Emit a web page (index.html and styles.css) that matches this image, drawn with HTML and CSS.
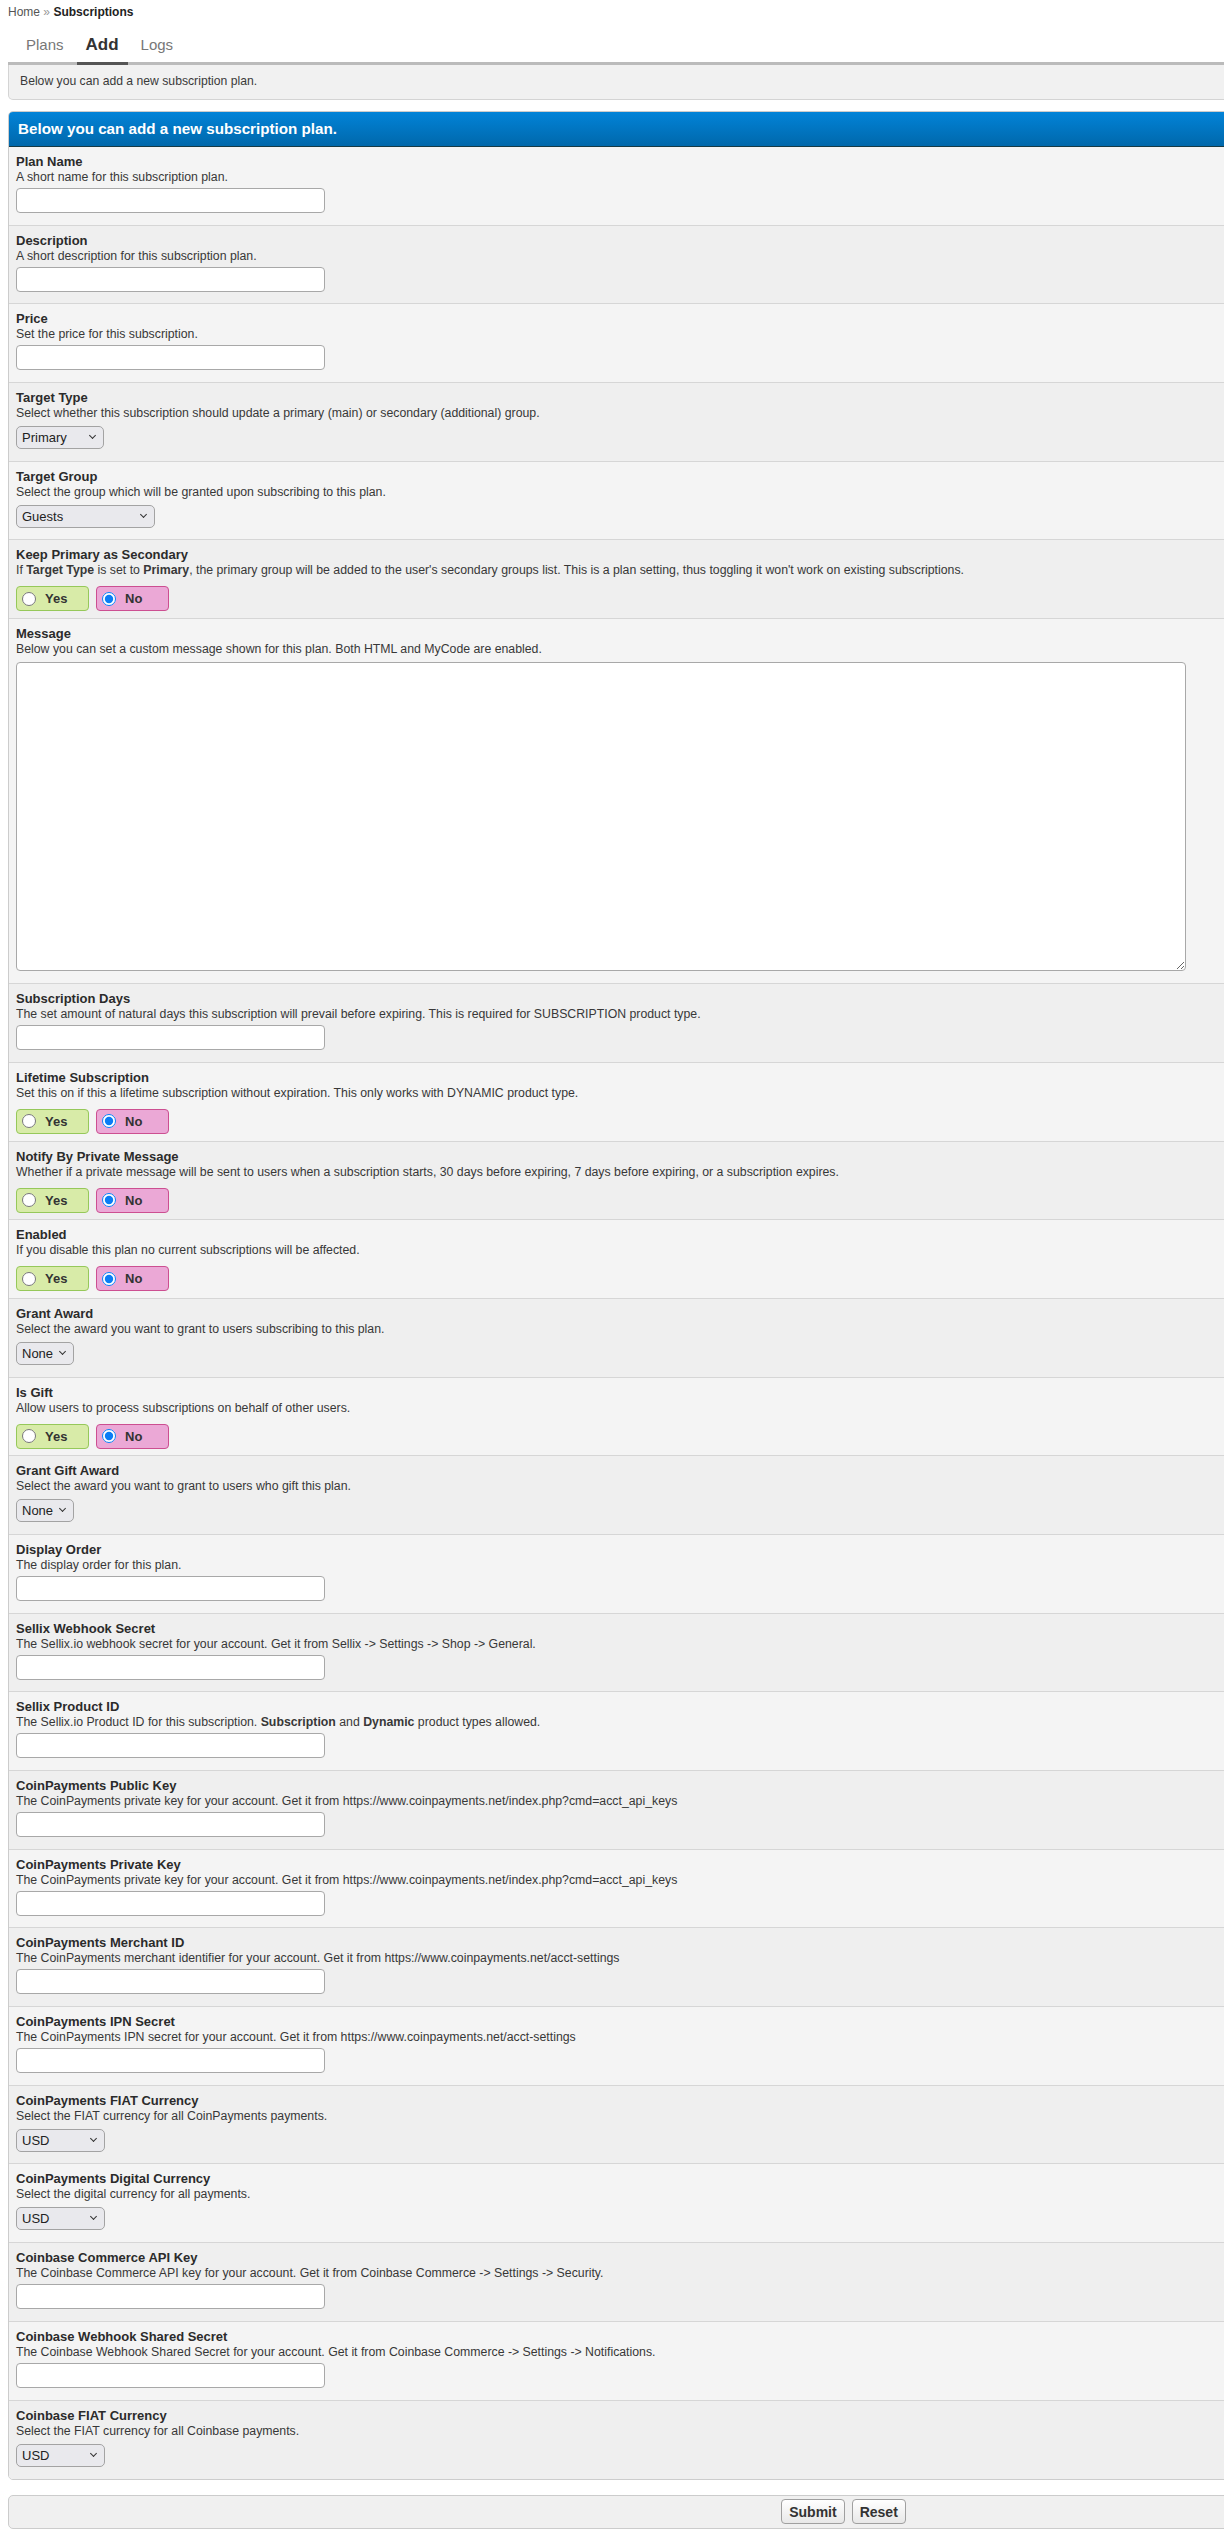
FILE: index.html
```html
<!DOCTYPE html>
<html lang="en">
<head>
    <meta charset="UTF-8" />
    <title>Subscriptions - Add</title>
    <link rel="stylesheet" href="styles.css">
</head>
<body>
    <div class="page">
        <div class="breadcrumb">
            <a href="#">Home</a> <span class="sep">&raquo;</span> <strong>Subscriptions</strong>
        </div>

        <ul class="tabs">
            <li><a href="#">Plans</a></li>
            <li class="active"><a href="#">Add</a></li>
            <li><a href="#">Logs</a></li>
        </ul>
        <div class="tab-info">Below you can add a new subscription plan.</div>

        <form class="form-container">
            <div class="form-head">Below you can add a new subscription plan.</div>

            <div class="row">
                <label class="row-title">Plan Name</label>
                <div class="row-desc">A short name for this subscription plan.</div>
                <input type="text" class="text-input" />
            </div>
            <div class="row">
                <label class="row-title">Description</label>
                <div class="row-desc">A short description for this subscription plan.</div>
                <input type="text" class="text-input" />
            </div>
            <div class="row">
                <label class="row-title">Price</label>
                <div class="row-desc">Set the price for this subscription.</div>
                <input type="text" class="text-input" />
            </div>
            <div class="row">
                <label class="row-title">Target Type</label>
                <div class="row-desc">Select whether this subscription should update a primary (main) or secondary (additional) group.</div>
                <span class="select w-primary"><select><option>Primary</option><option>Secondary</option></select></span>
            </div>
            <div class="row">
                <label class="row-title">Target Group</label>
                <div class="row-desc">Select the group which will be granted upon subscribing to this plan.</div>
                <span class="select w-guests"><select><option>Guests</option></select></span>
            </div>
            <div class="row">
                <label class="row-title">Keep Primary as Secondary</label>
                <div class="row-desc">If <strong>Target Type</strong> is set to <strong>Primary</strong>, the primary group will be added to the user's secondary groups list. This is a plan setting, thus toggling it won't work on existing subscriptions.</div>
                <div class="yesno">
                    <label class="yes"><input type="radio" name="keep_primary" /> Yes</label>
                    <label class="no"><input type="radio" name="keep_primary" checked /> No</label>
                </div>
            </div>
            <div class="row row-tall">
                <label class="row-title">Message</label>
                <div class="row-desc">Below you can set a custom message shown for this plan. Both HTML and MyCode are enabled.</div>
                <textarea class="text-area"></textarea>
            </div>
            <div class="row">
                <label class="row-title">Subscription Days</label>
                <div class="row-desc">The set amount of natural days this subscription will prevail before expiring. This is required for SUBSCRIPTION product type.</div>
                <input type="text" class="text-input" />
            </div>
            <div class="row">
                <label class="row-title">Lifetime Subscription</label>
                <div class="row-desc">Set this on if this a lifetime subscription without expiration. This only works with DYNAMIC product type.</div>
                <div class="yesno">
                    <label class="yes"><input type="radio" name="lifetime" /> Yes</label>
                    <label class="no"><input type="radio" name="lifetime" checked /> No</label>
                </div>
            </div>
            <div class="row">
                <label class="row-title">Notify By Private Message</label>
                <div class="row-desc">Whether if a private message will be sent to users when a subscription starts, 30 days before expiring, 7 days before expiring, or a subscription expires.</div>
                <div class="yesno">
                    <label class="yes"><input type="radio" name="notify_pm" /> Yes</label>
                    <label class="no"><input type="radio" name="notify_pm" checked /> No</label>
                </div>
            </div>
            <div class="row">
                <label class="row-title">Enabled</label>
                <div class="row-desc">If you disable this plan no current subscriptions will be affected.</div>
                <div class="yesno">
                    <label class="yes"><input type="radio" name="enabled" /> Yes</label>
                    <label class="no"><input type="radio" name="enabled" checked /> No</label>
                </div>
            </div>
            <div class="row">
                <label class="row-title">Grant Award</label>
                <div class="row-desc">Select the award you want to grant to users subscribing to this plan.</div>
                <span class="select w-none"><select><option>None</option></select></span>
            </div>
            <div class="row">
                <label class="row-title">Is Gift</label>
                <div class="row-desc">Allow users to process subscriptions on behalf of other users.</div>
                <div class="yesno">
                    <label class="yes"><input type="radio" name="is_gift" /> Yes</label>
                    <label class="no"><input type="radio" name="is_gift" checked /> No</label>
                </div>
            </div>
            <div class="row">
                <label class="row-title">Grant Gift Award</label>
                <div class="row-desc">Select the award you want to grant to users who gift this plan.</div>
                <span class="select w-none"><select><option>None</option></select></span>
            </div>
            <div class="row">
                <label class="row-title">Display Order</label>
                <div class="row-desc">The display order for this plan.</div>
                <input type="text" class="text-input" />
            </div>
            <div class="row">
                <label class="row-title">Sellix Webhook Secret</label>
                <div class="row-desc">The Sellix.io webhook secret for your account. Get it from Sellix -&gt; Settings -&gt; Shop -&gt; General.</div>
                <input type="text" class="text-input" />
            </div>
            <div class="row">
                <label class="row-title">Sellix Product ID</label>
                <div class="row-desc">The Sellix.io Product ID for this subscription. <strong>Subscription</strong> and <strong>Dynamic</strong> product types allowed.</div>
                <input type="text" class="text-input" />
            </div>
            <div class="row">
                <label class="row-title">CoinPayments Public Key</label>
                <div class="row-desc">The CoinPayments private key for your account. Get it from https://www.coinpayments.net/index.php?cmd=acct_api_keys</div>
                <input type="text" class="text-input" />
            </div>
            <div class="row">
                <label class="row-title">CoinPayments Private Key</label>
                <div class="row-desc">The CoinPayments private key for your account. Get it from https://www.coinpayments.net/index.php?cmd=acct_api_keys</div>
                <input type="text" class="text-input" />
            </div>
            <div class="row">
                <label class="row-title">CoinPayments Merchant ID</label>
                <div class="row-desc">The CoinPayments merchant identifier for your account. Get it from https://www.coinpayments.net/acct-settings</div>
                <input type="text" class="text-input" />
            </div>
            <div class="row">
                <label class="row-title">CoinPayments IPN Secret</label>
                <div class="row-desc">The CoinPayments IPN secret for your account. Get it from https://www.coinpayments.net/acct-settings</div>
                <input type="text" class="text-input" />
            </div>
            <div class="row">
                <label class="row-title">CoinPayments FIAT Currency</label>
                <div class="row-desc">Select the FIAT currency for all CoinPayments payments.</div>
                <span class="select w-usd"><select><option>USD</option></select></span>
            </div>
            <div class="row">
                <label class="row-title">CoinPayments Digital Currency</label>
                <div class="row-desc">Select the digital currency for all payments.</div>
                <span class="select w-usd"><select><option>USD</option></select></span>
            </div>
            <div class="row">
                <label class="row-title">Coinbase Commerce API Key</label>
                <div class="row-desc">The Coinbase Commerce API key for your account. Get it from Coinbase Commerce -&gt; Settings -&gt; Security.</div>
                <input type="text" class="text-input" />
            </div>
            <div class="row">
                <label class="row-title">Coinbase Webhook Shared Secret</label>
                <div class="row-desc">The Coinbase Webhook Shared Secret for your account. Get it from Coinbase Commerce -&gt; Settings -&gt; Notifications.</div>
                <input type="text" class="text-input" />
            </div>
            <div class="row">
                <label class="row-title">Coinbase FIAT Currency</label>
                <div class="row-desc">Select the FIAT currency for all Coinbase payments.</div>
                <span class="select w-usd"><select><option>USD</option></select></span>
            </div>
        </form>

        <div class="form-buttons">
            <button type="submit" class="btn">Submit</button>
            <button type="reset" class="btn">Reset</button>
        </div>
    </div>
</body>
</html>
```

FILE: styles.css
```css
html,
body {
    overflow-x: hidden;
}

body {
    margin: 0;
    padding: 0 8px;
    background: #ffffff;
    color: #333333;
    font-family: "Liberation Sans", Arial, sans-serif;
    font-size: 12px;
}

.page {
    width: 1671px;
}

/* breadcrumb */

.breadcrumb {
    padding-top: 5px;
    line-height: 14px;
    font-size: 12px;
    color: #555555;
}

.breadcrumb a {
    color: #555555;
    text-decoration: none;
}

.breadcrumb .sep {
    color: #999999;
}

.breadcrumb strong {
    color: #222222;
}

/* tabs */

.tabs {
    list-style: none;
    margin: 7px 0 0;
    padding: 0 0 0 9px;
    display: flex;
    gap: 4px;
    border-bottom: 3px solid #bbbbbb;
}

.tabs li {
    padding: 3px 9px 0;
    line-height: 32px;
    margin-bottom: -3px;
    border-bottom: 3px solid transparent;
}

.tabs a {
    color: #777777;
    font-size: 15px;
    text-decoration: none;
}

.tabs li.active {
    border-bottom-color: #555555;
}

.tabs li.active a {
    color: #333333;
    font-size: 17px;
    font-weight: bold;
}

.tab-info {
    background: #f1f1f1;
    border: 1px solid #d4d4d4;
    border-top: none;
    border-radius: 0 0 5px 5px;
    padding: 9px 11px 10px;
    line-height: 15px;
    font-size: 12.2px;
    color: #3a3a3a;
}

/* form */

.form-container {
    margin: 11px 0 0;
    border: 1px solid #cccccc;
    border-radius: 5px;
    overflow: hidden;
}

.form-head {
    background: linear-gradient(to bottom, #0283d8 0%, #0068ab 100%);
    border-bottom: 1px solid #163a45;
    padding: 7px 9px;
    line-height: 20px;
    color: #ffffff;
    font-size: 15.2px;
    font-weight: bold;
}

.row {
    height: 78.7px;
    box-sizing: border-box;
    padding: 7px 7px 0;
    background: #f4f4f4;
    border-bottom: 1px solid #d6d6d6;
}

.row:nth-child(odd) {
    background: #efefef;
}

.row:last-child {
    border-bottom: none;
}

.row-tall {
    height: 365px;
}

.row-title {
    display: block;
    line-height: 16px;
    font-size: 13px;
    font-weight: bold;
    color: #2b2b2b;
}

.row-desc {
    line-height: 15px;
    font-size: 12.3px;
    color: #383838;
    white-space: nowrap;
}

.text-input {
    display: block;
    margin-top: 3px;
    width: 309px;
    height: 25px;
    box-sizing: border-box;
    border: 1px solid #a8a8a8;
    border-radius: 4px;
    background: #ffffff;
    padding: 2px 5px;
    font-family: inherit;
    font-size: 13px;
}

.text-area {
    display: block;
    margin-top: 5px;
    width: 1170px;
    height: 309px;
    box-sizing: border-box;
    border: 1px solid #a8a8a8;
    border-radius: 4px;
    background: #ffffff;
    font-family: inherit;
    font-size: 13px;
}

/* selects */

.select {
    position: relative;
    display: block;
    margin-top: 5px;
    height: 23px;
}

.select select {
    appearance: none;
    -webkit-appearance: none;
    width: 100%;
    height: 23px;
    box-sizing: border-box;
    border: 1px solid #a3a3a3;
    border-radius: 5px;
    background: #e9e9ed;
    padding: 0 5px;
    font-family: inherit;
    font-size: 13px;
    color: #222222;
}

.select::after {
    content: '';
    position: absolute;
    top: 7px;
    right: 9px;
    width: 4px;
    height: 4px;
    border-right: 1.5px solid #333333;
    border-bottom: 1.5px solid #333333;
    transform: rotate(45deg);
    pointer-events: none;
}

.w-primary { width: 88px; }
.w-guests { width: 139px; }
.w-none { width: 58px; }
.w-usd { width: 89px; }

/* yes / no */

.yesno {
    display: flex;
    gap: 7px;
    margin-top: 8px;
}

.yesno label {
    display: flex;
    align-items: center;
    width: 73px;
    height: 25px;
    box-sizing: border-box;
    padding-left: 5px;
    border: 1px solid;
    border-radius: 4px;
    font-size: 13px;
    font-weight: bold;
    color: #333333;
}

.yesno input {
    margin: 0 9px 0 0;
    width: 14px;
    height: 14px;
    accent-color: #0a7cf5;
}

.yesno .yes {
    background: #d8eba8;
    border-color: #96c85a;
}

.yesno .no {
    background: #eba8d6;
    border-color: #cc4f91;
}

/* buttons */

.form-buttons {
    margin-top: 15px;
    background: #f0f0f0;
    border: 1px solid #cccccc;
    border-radius: 5px;
    padding: 3px 0 4px;
    display: flex;
    justify-content: center;
    gap: 7px;
}

.btn {
    height: 25px;
    padding: 0 7px;
    border: 1px solid #a0a0a0;
    border-radius: 4px;
    background: linear-gradient(to bottom, #ffffff 0%, #e8e8e8 100%);
    font-family: inherit;
    font-size: 14px;
    font-weight: bold;
    color: #333333;
    cursor: pointer;
}
```
